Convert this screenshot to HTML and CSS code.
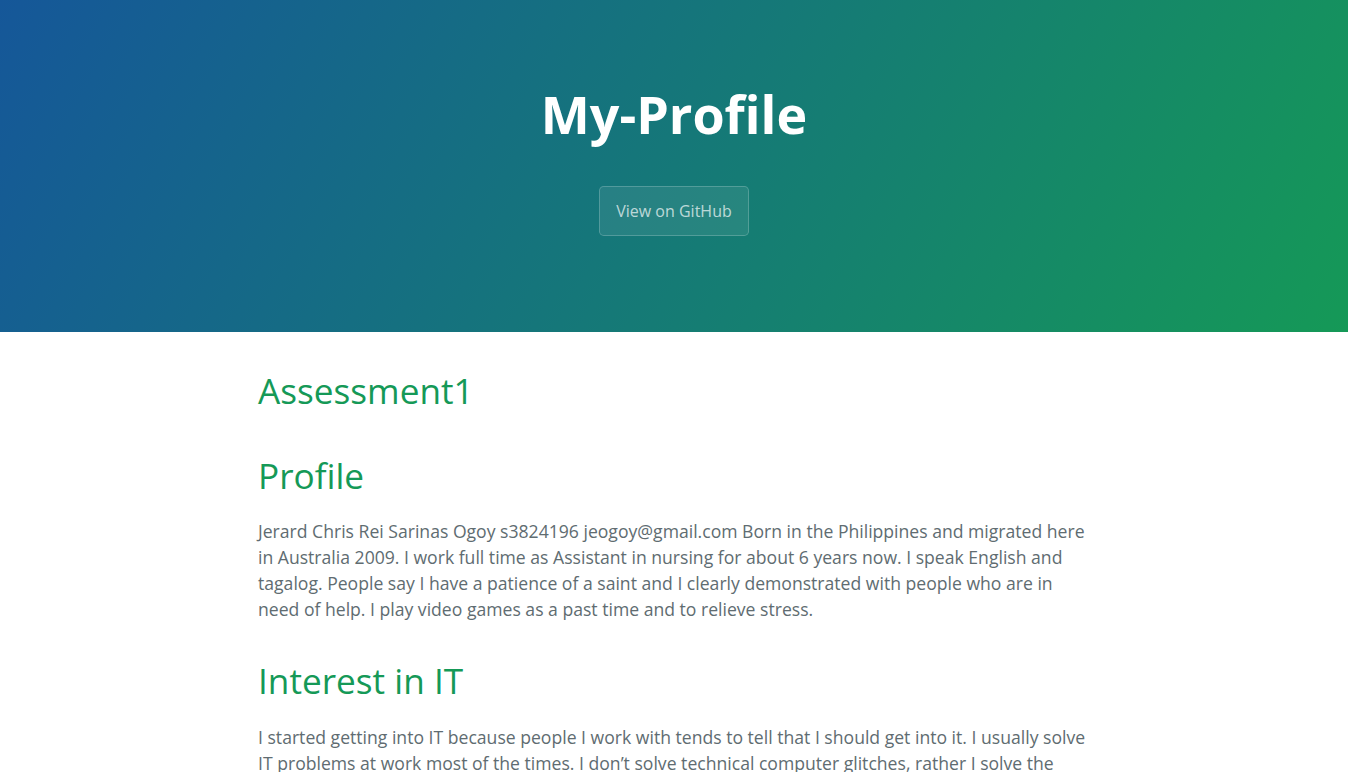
FILE: index.html
```html
<!DOCTYPE html>
<html lang="en">
<head>
<meta charset="UTF-8">
<title>My-Profile</title>
<link rel="stylesheet" href="styles.css">
</head>
<body>
<header class="page-header">
  <h1 class="project-name">My-Profile</h1>
  <a class="btn" href="#">View on GitHub</a>
</header>
<main class="main-content">
  <h1>Assessment1</h1>
  <h1>Profile</h1>
  <p>Jerard Chris Rei Sarinas Ogoy s3824196 jeogoy@gmail.com Born in the Philippines and migrated here in Australia 2009. I work full time as Assistant in nursing for about 6 years now. I speak English and tagalog. People say I have a patience of a saint and I clearly demonstrated with people who are in need of help. I play video games as a past time and to relieve stress.</p>
  <h1>Interest in IT</h1>
  <p>I started getting into IT because people I work with tends to tell that I should get into it. I usually solve IT problems at work most of the times. I don’t solve technical computer glitches, rather I solve the problems my colleagues have with the programs and systems we use at work every day.</p>
</main>
</body>
</html>
```
FILE: styles.css
```css
* { box-sizing: border-box; }
html, body { margin: 0; padding: 0; }
body {
  font-family: "Open Sans", "Helvetica Neue", Helvetica, Arial, sans-serif;
  font-size: 16px;
  line-height: 1.5;
  color: #606c71;
  background: #fff;
}
.page-header {
  display: flex;
  flex-direction: column;
  align-items: center;
  padding: 75px 96px 80px;
  text-align: center;
  color: #fff;
  background-color: #159957;
  background-image: linear-gradient(120deg, #155799, #159957);
}
.project-name {
  margin: 0 0 33px;
  font-size: 52px;
  line-height: 78px;
  font-weight: 700;
}
.btn {
  display: inline-block;
  margin-bottom: 16px;
  padding: 12px 16px;
  font-size: 16px;
  line-height: 24px;
  color: rgba(255, 255, 255, 0.7);
  text-decoration: none;
  background-color: rgba(255, 255, 255, 0.08);
  border: 1px solid rgba(255, 255, 255, 0.2);
  border-radius: 0.3rem;
}
.main-content {
  max-width: 1024px;
  margin: 0 auto;
  padding: 32px 96px;
  font-size: 17.6px;
  word-wrap: break-word;
}
.main-content h1 {
  margin: 32px 0 16px;
  font-size: 35.2px;
  line-height: 1.5;
  font-weight: 400;
  color: #159957;
}
.main-content h1:first-child { margin-top: 0; }
.main-content p {
  margin: 17.6px 0;
  line-height: 25.8px;
}
```
